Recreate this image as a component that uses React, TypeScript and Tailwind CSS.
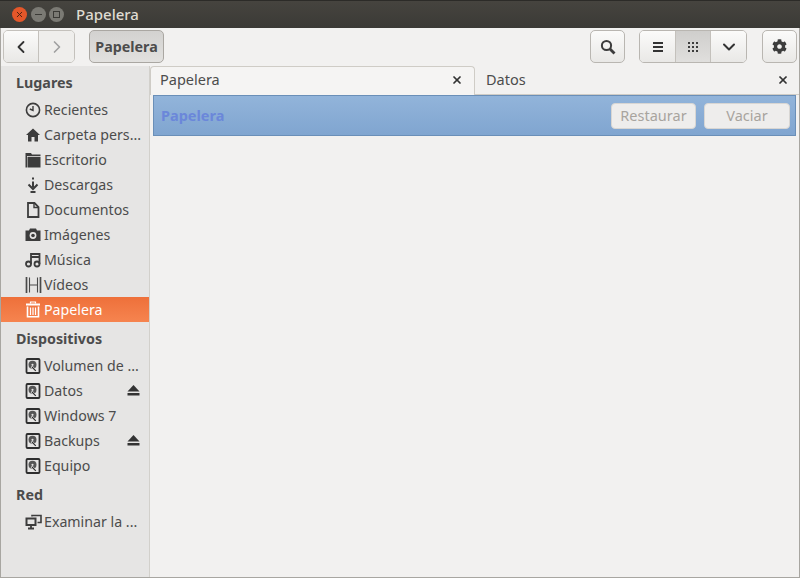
import { ChevronDown, ChevronLeft, ChevronRight, X } from "lucide-react";
import { FaCog } from "react-icons/fa";
import type { ReactNode } from "react";

const font = "font-['Noto_Sans',sans-serif]";

function Clock() {
  return (
    <svg width="16" height="16" viewBox="0 0 16 16" fill="none" stroke="#3c3c3c">
      <circle cx="8" cy="8" r="6.6" strokeWidth="1.6" />
      <path d="M8 4V8.500L4.800 7" strokeWidth="1.400" />
    </svg>
  );
}

function Home() {
  return (
    <svg width="16" height="16" viewBox="0 0 16 16" fill="#3c3c3c">
      <path d="M8 1.500 1 8H3V14.500H6.500V10H9.500V14.500H13V8H15Z" />
    </svg>
  );
}

function Desktop() {
  return (
    <svg width="16" height="16" viewBox="0 0 16 16" fill="#3c3c3c">
      <path d="M0.500 1H6L7 2.500H15.500V4H2V15.500H0.500Z" />
      <path d="M2.500 4.800H15.500V15.500H2.500Z" />
    </svg>
  );
}

function Download() {
  return (
    <svg width="16" height="16" viewBox="0 0 16 16" fill="none" stroke="#3c3c3c" strokeWidth="2">
      <path d="M8 0.500V2.500M8 4.500V10.500" />
      <path d="M3.500 7.500 8 12 12.500 7.500" />
      <path d="M5.500 15H10.500" />
    </svg>
  );
}

function Doc() {
  return (
    <svg width="16" height="16" viewBox="0 0 16 16" fill="none" stroke="#3c3c3c" strokeWidth="1.800">
      <path d="M3 1H9.500L13.500 5V15H3Z" />
      <path d="M9 1.500V5.500H13" strokeWidth="1.400" />
    </svg>
  );
}

function Camera() {
  return (
    <svg width="16" height="16" viewBox="0 0 16 16">
      <path d="M0.500 3.500H4L5 1.500H11L12 3.500H15.500V14H0.500Z" fill="#3c3c3c" />
      <circle cx="8" cy="8.500" r="3.400" fill="#e6e5e4" />
      <circle cx="8" cy="8.500" r="1.800" fill="#3c3c3c" />
    </svg>
  );
}

function Music() {
  return (
    <svg width="16" height="16" viewBox="0 0 16 16" fill="none" stroke="#3c3c3c" strokeWidth="1.800">
      <circle cx="3.500" cy="12" r="2.500" />
      <circle cx="12" cy="12" r="2.500" />
      <path d="M6 12V2H14.500V12M6 5H14.500" />
    </svg>
  );
}

function Film() {
  return (
    <svg width="17" height="18" viewBox="0 0 17 18" fill="none" stroke="#4a4a4a" strokeWidth="1.100">
      <path d="M1.500 1V17M15.500 1V17" strokeWidth="1.700" />
      <path d="M4.500 1.500V16.500M12.500 1.500V16.500M4.500 9H12.500" />
    </svg>
  );
}

function Trash() {
  return (
    <svg width="16" height="17" viewBox="0 0 16 17" fill="none" stroke="#fff">
      <path d="M1 3.500H15" strokeWidth="2" />
      <path d="M5.500 2.500V1H10.500V2.500" strokeWidth="1.200" />
      <path d="M2.500 5.500V15.800H13.500V5.500" strokeWidth="1.600" />
      <path d="M5.500 6.500V14M8 6.500V14M10.500 6.500V14" strokeWidth="1.200" />
    </svg>
  );
}

function Drive() {
  return (
    <svg width="16" height="16" viewBox="0 0 16 16" fill="none">
      <rect x="1.500" y="1" width="13" height="14" rx="1" stroke="#2e2e2e" strokeWidth="1.800" />
      <circle cx="7.500" cy="6.800" r="4" fill="#555" />
      <circle cx="7.500" cy="6.800" r="1.100" fill="#e6e5e4" />
      <path d="M6.500 8.500 10.800 13" stroke="#e6e5e4" strokeWidth="2.200" />
      <path d="M7 9 10.800 12.800" stroke="#2e2e2e" strokeWidth="1.100" />
    </svg>
  );
}

function Network() {
  return (
    <svg width="17" height="16" viewBox="0 0 17 16" fill="none" stroke="#3c3c3c">
      <path d="M7 2.500V1.500H16V8.500H12.500" strokeWidth="1.600" />
      <rect x="1" y="4" width="10" height="7.500" fill="#3c3c3c" strokeWidth="1" />
      <rect x="2.500" y="5.500" width="7" height="4.500" fill="#e6e5e4" stroke="none" />
      <path d="M3 14.500H9M6 11.500V14.500" strokeWidth="1.800" />
    </svg>
  );
}

function Eject() {
  return (
    <svg width="13" height="11" viewBox="0 0 13 11" fill="#333">
      <path d="M6.500 0 12.500 6.500H0.500Z" />
      <rect x="0.500" y="8" width="12" height="2.500" />
    </svg>
  );
}

function Grid() {
  return (
    <svg width="10" height="10" viewBox="0 0 10 10" fill="#3c3c3c">
      {[0, 4, 8].flatMap((y) =>
        [0, 4, 8].map((x) => <rect key={`${x}-${y}`} x={x} y={y} width="2" height="2" />)
      )}
    </svg>
  );
}

function ListIcon() {
  return (
    <svg width="10" height="10" viewBox="0 0 10 10" fill="#333">
      <rect y="0" width="10" height="2" />
      <rect y="4" width="10" height="2" />
      <rect y="8" width="10" height="2" />
    </svg>
  );
}

function SearchIcon() {
  return (
    <svg width="16" height="16" viewBox="0 0 16 16" fill="none" stroke="#3c3c3c">
      <circle cx="6.500" cy="6.500" r="4.600" strokeWidth="2" />
      <path d="M10 10 14.500 14.500" strokeWidth="2.800" />
    </svg>
  );
}

function SidebarHeading({ label }: { label: string }) {
  return (
    <div className="h-[31px] pt-[2px] flex items-center pl-[15px] text-[14.3px] font-bold text-[#4c4c4c]">{label}</div>
  );
}

function SidebarRow({
  icon,
  label,
  active,
  eject,
}: {
  icon: ReactNode;
  label: string;
  active?: boolean;
  eject?: boolean;
}) {
  return (
    <div
      className={`h-[25px] flex items-center pl-[24px] pr-[9px] text-[14.2px] ${
        active ? "bg-gradient-to-b from-[#ee703a] to-[#f6844f] text-white" : "text-[#4c4c4c]"
      }`}
    >
      <span className="w-[19px] shrink-0 flex items-center">{icon}</span>
      <span className="flex-1 whitespace-nowrap">{label}</span>
      {eject && <Eject />}
    </div>
  );
}

function ToolButton({ children, className = "" }: { children: ReactNode; className?: string }) {
  return (
    <div
      className={`h-[33px] flex items-center justify-center border border-[#b9b6b1] rounded-[5px] bg-gradient-to-b from-[#fbfbfa] to-[#e9e8e6] ${className}`}
    >
      {children}
    </div>
  );
}

export default function App() {
  return (
    <div className={`w-[800px] h-[578px] flex flex-col overflow-hidden bg-[#f2f1f0] ${font}`}>
      {/* Title bar */}
      <div className="h-[28px] shrink-0 flex items-center pl-[12px] border-t border-[#2c2b28] bg-gradient-to-b from-[#46443f] to-[#3b3a36]">
        <div className="flex gap-[3.500px]">
          <div className="w-[15px] h-[15px] rounded-full bg-[#e4572a] flex items-center justify-center">
            <X size={9} strokeWidth={2.500} color="#4a2010" />
          </div>
          <div className="w-[15px] h-[15px] rounded-full bg-[#7b7a74] flex items-center justify-center">
            <div className="w-[7px] h-[1.500px] bg-[#3b3a36]" />
          </div>
          <div className="w-[15px] h-[15px] rounded-full bg-[#7b7a74] flex items-center justify-center">
            <div className="w-[7px] h-[7px] border border-[#3b3a36]" />
          </div>
        </div>
        <span className="ml-[12px] text-[15px] font-medium text-[#dfdbd2]">Papelera</span>
      </div>

      <div className="flex-1 min-h-0 flex flex-col border-x border-b border-[#a8a6a1]">
        {/* Toolbar */}
        <div className="h-[38px] shrink-0 flex items-start pt-[2px] pl-[2px] pr-[2px] bg-[#f2f1f0]">
          <div className="w-[72px] h-[33px] flex border border-[#c4c1bc] rounded-[5px] overflow-hidden">
            <div className="w-[35px] flex items-center justify-center border-r border-[#c4c1bc] bg-gradient-to-b from-[#fbfbfa] to-[#e9e8e6]">
              <ChevronLeft size={20} strokeWidth={2.200} color="#333" />
            </div>
            <div className="flex-1 flex items-center justify-center bg-[#efeeec]">
              <ChevronRight size={20} strokeWidth={2} color="#a0a0a0" />
            </div>
          </div>
          <div className="ml-[14px] w-[75px] h-[33px] flex items-center justify-center border border-[#aaa7a2] rounded-[5px] bg-gradient-to-b from-[#d3d2d0] to-[#e2e1df] text-[14.300px] font-bold text-[#4c4c4c]">
            Papelera
          </div>
          <div className="flex-1" />
          <ToolButton className="w-[35px]">
            <SearchIcon />
          </ToolButton>
          <div className="ml-[14px] w-[108px] h-[33px] flex border border-[#b9b6b1] rounded-[5px] overflow-hidden">
            <div className="w-[35px] flex items-center justify-center bg-gradient-to-b from-[#fbfbfa] to-[#e9e8e6]">
              <ListIcon />
            </div>
            <div className="w-[36px] flex items-center justify-center border-x border-[#c4c1bc] bg-gradient-to-b from-[#cfcecc] to-[#e0dfdd]">
              <Grid />
            </div>
            <div className="flex-1 flex items-center justify-center bg-gradient-to-b from-[#fbfbfa] to-[#e9e8e6]">
              <ChevronDown size={20} strokeWidth={2.400} color="#333" />
            </div>
          </div>
          <ToolButton className="ml-[15px] w-[35px]">
            <FaCog size={15} color="#3c3c3c" />
          </ToolButton>
        </div>

        <div className="flex-1 flex min-h-0">
          {/* Sidebar */}
          <div className="w-[149px] shrink-0 bg-[#e6e5e4] border-r border-[#d2d0cb]">
            <SidebarHeading label="Lugares" />
            <SidebarRow icon={<Clock />} label="Recientes" />
            <SidebarRow icon={<Home />} label="Carpeta pers..." />
            <SidebarRow icon={<Desktop />} label="Escritorio" />
            <SidebarRow icon={<Download />} label="Descargas" />
            <SidebarRow icon={<Doc />} label="Documentos" />
            <SidebarRow icon={<Camera />} label="Imágenes" />
            <SidebarRow icon={<Music />} label="Música" />
            <SidebarRow icon={<Film />} label="Vídeos" />
            <SidebarRow icon={<Trash />} label="Papelera" active />
            <SidebarHeading label="Dispositivos" />
            <SidebarRow icon={<Drive />} label="Volumen de ..." />
            <SidebarRow icon={<Drive />} label="Datos" eject />
            <SidebarRow icon={<Drive />} label="Windows 7" />
            <SidebarRow icon={<Drive />} label="Backups" eject />
            <SidebarRow icon={<Drive />} label="Equipo" />
            <SidebarHeading label="Red" />
            <SidebarRow icon={<Network />} label="Examinar la ..." />
          </div>

          {/* Main */}
          <div className="flex-1 min-w-0 flex flex-col">
            <div className="h-[29px] shrink-0 flex border-b border-[#cfccc6]">
              <div className="w-[325px] h-[29px] flex items-center pl-[9px] pr-[11px] pb-[2px] bg-[#f5f4f3] border border-b-0 border-[#cfccc6] rounded-t-[4px] text-[14.500px] text-[#4c4c4c]">
                <span className="flex-1">Papelera</span>
                <X size={12} strokeWidth={3.500} color="#333" />
              </div>
              <div className="flex-1 flex items-center pl-[11px] pr-[10px] text-[14.500px] text-[#4c4c4c]">
                <span className="flex-1">Datos</span>
                <X size={12} strokeWidth={3.500} color="#333" />
              </div>
            </div>
            <div className="ml-[3px] mr-[3px] h-[41px] shrink-0 flex items-center gap-[8px] pl-[7px] pr-[5px] border border-[#6a8fb8] bg-gradient-to-b from-[#92b4da] to-[#80a5d0]">
              <span className="flex-1 text-[14.500px] font-bold text-[#6b87da]">Papelera</span>
              <div className="w-[85px] h-[26px] flex items-center justify-center rounded-[4px] border border-[#d8d6d3] bg-[#eeedec] text-[14.500px] text-[#a8a49e]">
                Restaurar
              </div>
              <div className="w-[86px] h-[26px] flex items-center justify-center rounded-[4px] border border-[#d8d6d3] bg-[#eeedec] text-[14.500px] text-[#a8a49e]">
                Vaciar
              </div>
            </div>
            <div className="flex-1" />
          </div>
        </div>
      </div>
    </div>
  );
}
